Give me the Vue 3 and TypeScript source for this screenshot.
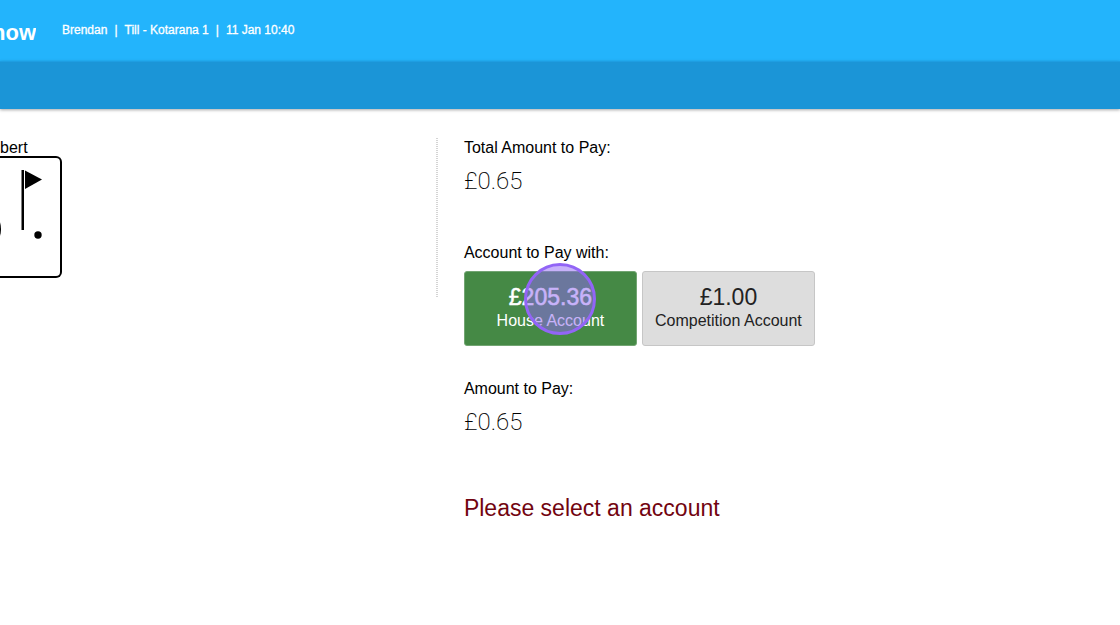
<script setup lang="ts">
import { ref } from 'vue'

interface Account {
  id: string
  balance: string
  name: string
}

const accounts: Account[] = [
  { id: 'house', balance: '£205.36', name: 'House Account' },
  { id: 'competition', balance: '£1.00', name: 'Competition Account' },
]

const session: string[] = ['Brendan', 'Till - Kotarana 1', '11 Jan 10:40']
const selected = ref('house')
</script>

<template>
  <div class="page">
    <header class="topbar">
      <div class="brand"><span>now</span></div>
      <div class="session">
        <template v-for="(item, i) in session" :key="item">
          <span v-if="i > 0">|</span>
          <span>{{ item }}</span>
        </template>
      </div>
    </header>
    <nav class="navbar" aria-label="Main"></nav>

    <main class="content">
      <section class="member">
        <div class="member-name">bert</div>
        <div class="card">
          <svg class="card-art" viewBox="0 0 60 118" aria-hidden="true">
            <ellipse cx="-7" cy="71" rx="8" ry="14" />
            <path d="M21.500 12h2.500v60h-2.500z" />
            <path d="M25 12.500L42 21.500L25 31z" />
            <circle cx="38" cy="77" r="3.700" />
          </svg>
        </div>
      </section>

      <section class="payment">
        <div class="field">
          <div class="label">Total Amount to Pay:</div>
          <div class="amount">£0.65</div>
        </div>
        <div class="field">
          <div class="label">Account to Pay with:</div>
          <div class="accounts">
            <button
              v-for="account in accounts"
              :key="account.id"
              type="button"
              class="account"
              :class="{ active: account.id === selected }"
              :aria-pressed="account.id === selected"
              @click="selected = account.id"
            >
              <span class="balance">{{ account.balance }}</span>
              <span class="name">{{ account.name }}</span>
              <span v-if="account.id === selected" class="pointer"></span>
            </button>
          </div>
        </div>
        <div class="field">
          <div class="label">Amount to Pay:</div>
          <div class="amount">£0.65</div>
        </div>
        <p class="message">Please select an account</p>
      </section>
    </main>
  </div>
</template>

<style>
body {
  background: #fff;
}
</style>

<style scoped>
.page {
  font-family: "Liberation Sans", Arial, sans-serif;
  font-size: 16px;
  line-height: 20px;
  color: #000;
  overflow: hidden;
}
.topbar {
  display: flex;
  align-items: center;
  gap: 26px;
  height: 61px;
  background: #23b4fc;
  color: #fff;
}
.brand {
  display: flex;
  justify-content: flex-end;
  width: 36px;
  overflow: hidden;
  padding-top: 4px;
  font-size: 22px;
  line-height: 28px;
  font-weight: 700;
}
.session {
  display: flex;
  gap: 7px;
  padding-bottom: 2px;
  font-size: 12px;
  line-height: 16px;
  -webkit-text-stroke: 0.300px #fff;
}
.navbar {
  height: 48px;
  background: #1b95d7;
  border-top: 1px solid #1e9ee2;
  box-sizing: border-box;
  box-shadow: 0 1px 3px rgba(0, 0, 0, 0.35);
}
.content {
  display: grid;
  grid-template-columns: 39.1% 1fr;
  align-items: start;
  padding-top: 29px;
}
.member {
  min-height: 160px;
  background: repeating-linear-gradient(#d4d4d4 0 1px, #fff 1px 2px) right / 2px 100% no-repeat;
}
.card {
  width: 60px;
  border: 2px solid #000;
  border-left: 0;
  border-radius: 0 6px 6px 0;
  margin-top: -2px;
}
.card-art {
  display: block;
  width: 60px;
  height: 118px;
}
.payment {
  padding-left: 26px;
}
.field {
  margin-bottom: 47px;
}
.label {
  margin-bottom: 8px;
}
.amount {
  font-family: Roboto, "Liberation Sans", sans-serif;
  font-weight: 200;
  font-size: 24px;
  line-height: 30px;
}
.accounts {
  display: flex;
  gap: 5px;
  margin-bottom: -14px;
}
.account {
  position: relative;
  display: flex;
  flex-direction: column;
  align-items: center;
  width: 173px;
  padding: 12px 0 14px;
  border: 1px solid #c6c6c6;
  border-radius: 3px;
  background: #ddd;
  color: #222;
  font: inherit;
  cursor: pointer;
}
.account.active {
  background: #458945;
  border-color: #72a572;
  color: #fff;
}
.balance {
  font-size: 23px;
  line-height: 27px;
}
.active .balance {
  -webkit-text-stroke: 0.500px currentColor;
}
.name {
  line-height: 20px;
}
.pointer {
  position: absolute;
  top: -9px;
  left: 59px;
  width: 72px;
  height: 72px;
  box-sizing: border-box;
  border: 3px solid #9265f6;
  border-radius: 50%;
  background: rgba(146, 101, 246, 0.5);
}
.message {
  margin: 0;
  padding-top: 10px;
  font-size: 23px;
  line-height: 28px;
  color: #720410;
}
</style>
